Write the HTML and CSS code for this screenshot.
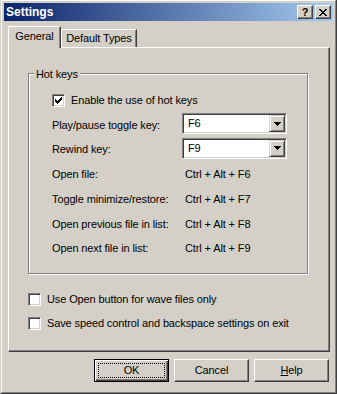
FILE: index.html
```html
<!DOCTYPE html>
<html>
<head>
<title>Settings</title>
<link rel="stylesheet" href="styles.css">
</head>
<body>
    <div class="window">
        <div class="frame">
            <div class="caption">
                <span class="caption-title">Settings</span>
                <div class="caption-buttons">
                    <span class="cap-btn cap-help">?</span>
                    <span class="cap-btn">
                        <svg width="8" height="7" viewBox="0 0 8 7" shape-rendering="crispEdges"><path d="M0 0h2v1h-2z M6 0h2v1h-2z M1 1h2v1h-2z M5 1h2v1h-2z M2 2h4v1h-4z M3 3h2v1h-2z M2 4h4v1h-4z M1 5h2v1h-2z M5 5h2v1h-2z M0 6h2v1h-2z M6 6h2v1h-2z" fill="#000"/></svg>
                    </span>
                </div>
            </div>

            <div class="tabs">
                <div class="tab tab-active">General</div>
                <div class="tab tab-other">Default Types</div>
            </div>

            <div class="panel">
                <div class="group">
                    <div class="group-label">Hot keys</div>
                    <div class="hotkeys">
                        <div class="check-row span-all">
                            <span class="checkbox">
                                <svg width="7" height="7" viewBox="0 0 7 7" shape-rendering="crispEdges"><path d="M6 0h1v1h-1z M5 1h2v1h-2z M0 2h1v1h-1z M4 2h3v1h-3z M0 3h2v1h-2z M3 3h3v1h-3z M0 4h5v1h-5z M1 5h3v1h-3z M2 6h1v1h-1z" fill="#000"/></svg>
                            </span>
                            <span>Enable the use of hot keys</span>
                        </div>

                        <span>Play/pause toggle key:</span>
                        <div class="combo">
                            <span class="combo-value">F6</span>
                            <span class="combo-btn"><svg width="7" height="4" viewBox="0 0 7 4" shape-rendering="crispEdges"><path d="M0 0h7v1h-7z M1 1h5v1h-5z M2 2h3v1h-3z M3 3h1v1h-1z" fill="#000"/></svg></span>
                        </div>

                        <span>Rewind key:</span>
                        <div class="combo">
                            <span class="combo-value">F9</span>
                            <span class="combo-btn"><svg width="7" height="4" viewBox="0 0 7 4" shape-rendering="crispEdges"><path d="M0 0h7v1h-7z M1 1h5v1h-5z M2 2h3v1h-3z M3 3h1v1h-1z" fill="#000"/></svg></span>
                        </div>

                        <span>Open file:</span>
                        <span class="key">Ctrl + Alt + F6</span>

                        <span>Toggle minimize/restore:</span>
                        <span class="key">Ctrl + Alt + F7</span>

                        <span>Open previous file in list:</span>
                        <span class="key">Ctrl + Alt + F8</span>

                        <span>Open next file in list:</span>
                        <span class="key">Ctrl + Alt + F9</span>
                    </div>
                </div>

                <div class="options">
                    <div class="check-row">
                        <span class="checkbox"></span>
                        <span>Use Open button for wave files only</span>
                    </div>
                    <div class="check-row">
                        <span class="checkbox"></span>
                        <span>Save speed control and backspace settings on exit</span>
                    </div>
                </div>
            </div>

            <div class="actions">
                <div class="btn btn-default"><span class="btn-label">OK</span></div>
                <div class="btn">Cancel</div>
                <div class="btn"><span><u>H</u>elp</span></div>
            </div>
        </div>
    </div>
</body>
</html>
```

FILE: styles.css
```css
body {
    margin: 0;
    font-family: "Liberation Sans", Arial, sans-serif;
    font-size: 11px;
    line-height: 13px;
    letter-spacing: -0.12px;
    color: #000;
    background: #d4d0c8;
}
.window {
    width: 337px;
    height: 394px;
    box-sizing: border-box;
    border-left: 1px solid #d4d0c8;
    border-right: 1px solid #404040;
    border-bottom: 1px solid #404040;
    background: #d4d0c8;
}
.frame {
    height: 100%;
    box-sizing: border-box;
    border-top: 1px solid #fff;
    border-left: 1px solid #fff;
    border-right: 1px solid #808080;
    border-bottom: 1px solid #808080;
    padding: 2px;
    display: flex;
    flex-direction: column;
}

/* title bar */
.caption {
    height: 18px;
    display: flex;
    align-items: center;
    padding-left: 2px;
    background: linear-gradient(to right, #0a246a, #a6caf0);
}
.caption-title {
    flex: 1;
    color: #fff;
    font-weight: bold;
    font-size: 12px;
    letter-spacing: 0;
}
.caption-buttons {
    display: flex;
    gap: 2px;
    margin-right: 2px;
}
.cap-btn {
    width: 16px;
    height: 14px;
    box-sizing: border-box;
    background: #d4d0c8;
    border: 1px solid;
    border-color: #fff #404040 #404040 #fff;
    box-shadow: inset -1px -1px #808080;
    display: flex;
    align-items: center;
    justify-content: center;
}
.cap-help {
    font-weight: bold;
    font-size: 11px;
    line-height: 11px;
}

/* tabs */
.tabs {
    display: flex;
    align-items: flex-end;
    margin-top: 5px;
    padding-left: 4px;
}
.tab {
    box-sizing: border-box;
    height: 18px;
    border-top: 1px solid #fff;
    border-left: 1px solid #fff;
    border-right: 1px solid #404040;
    border-top-left-radius: 2px;
    box-shadow: inset -1px 0 #808080;
    background: #d4d0c8;
    display: flex;
    align-items: center;
    justify-content: center;
}
.tab-active {
    width: 53px;
    height: 22px;
    margin-bottom: -1px;
    padding-bottom: 2px;
    position: relative;
    z-index: 1;
}
.tab-other {
    width: 76px;
}

/* tab page */
.panel {
    height: 305px;
    margin: 0 3px 0 4px;
    box-sizing: border-box;
    border: 1px solid;
    border-color: #fff #404040 #404040 #fff;
    box-shadow: inset -1px -1px #808080;
    padding: 25px 0 0 19px;
}
.group {
    width: 280px;
    height: 201px;
    box-sizing: border-box;
    border: 1px solid #808080;
    box-shadow: 1px 1px 0 #fff, inset 1px 1px 0 #fff;
}
.group-label {
    width: fit-content;
    margin: -6px 0 0 5px;
    padding: 0 2px;
    background: #d4d0c8;
}
.hotkeys {
    display: grid;
    grid-template-columns: 130px auto;
    grid-auto-rows: 24.75px;
    align-items: center;
    margin-top: 7px;
    padding-left: 23px;
}
.span-all {
    grid-column: 1 / -1;
}
.key {
    padding-left: 3px;
}

.check-row {
    display: flex;
    align-items: center;
    gap: 6px;
}
.checkbox {
    flex: none;
    width: 13px;
    height: 13px;
    box-sizing: border-box;
    background: #fff;
    border: 1px solid;
    border-color: #808080 #fff #fff #808080;
    box-shadow: inset 1px 1px #404040, inset -1px -1px #d4d0c8;
    display: flex;
    align-items: center;
    justify-content: center;
}

/* combo box */
.combo {
    width: 105px;
    height: 21px;
    box-sizing: border-box;
    margin-bottom: 3px;
    padding: 1px;
    background: #fff;
    border: 1px solid;
    border-color: #808080 #fff #fff #808080;
    box-shadow: inset 1px 1px #404040, inset -1px -1px #d4d0c8;
    display: flex;
}
.combo-value {
    flex: 1;
    padding-left: 4px;
    display: flex;
    align-items: center;
}
.combo-btn {
    width: 16px;
    box-sizing: border-box;
    background: #d4d0c8;
    border: 1px solid;
    border-color: #d4d0c8 #404040 #404040 #d4d0c8;
    box-shadow: inset 1px 1px #fff, inset -1px -1px #808080;
    display: flex;
    align-items: center;
    justify-content: center;
}

.options {
    margin-top: 13px;
}
.options .check-row {
    height: 24px;
}

/* dialog buttons */
.actions {
    display: flex;
    justify-content: flex-end;
    gap: 5px;
    margin-top: 7px;
    padding-right: 4px;
}
.btn {
    width: 75px;
    height: 23px;
    box-sizing: border-box;
    border: 1px solid;
    border-color: #fff #404040 #404040 #fff;
    box-shadow: inset -1px -1px #808080;
    display: flex;
    align-items: center;
    justify-content: center;
}
.btn-default {
    border-color: #000;
    box-shadow: inset 1px 1px #fff, inset -1px -1px #404040, inset -2px -2px #808080;
    padding: 3px;
}
.btn-label {
    flex: 1;
    align-self: stretch;
    border: 1px dotted #000;
    display: flex;
    align-items: center;
    justify-content: center;
}
```
